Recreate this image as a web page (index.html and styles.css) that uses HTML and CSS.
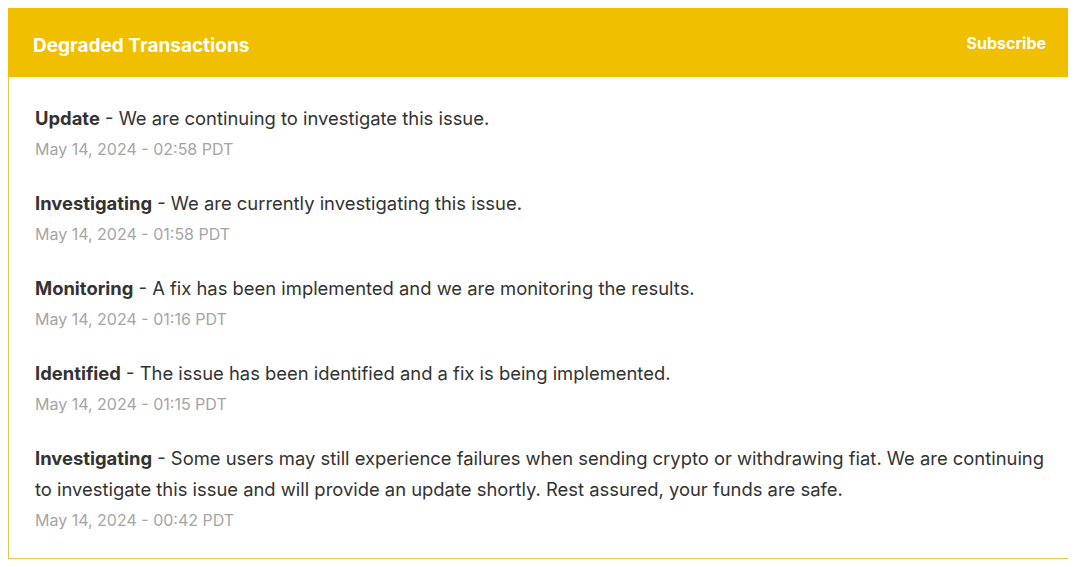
FILE: index.html
```html
<!DOCTYPE html>
<html>
<head>
<meta charset="utf-8">
<link rel="stylesheet" href="styles.css">
</head>
<body>
<div class="incident">
  <div class="header">
    <div class="title">Degraded Transactions</div>
    <a class="subscribe">Subscribe</a>
  </div>
  <div class="updates">
    <div class="update">
      <div class="text"><strong>Update</strong> - We are continuing to investigate this issue.</div>
      <div class="date">May 14, 2024 - 02:58 PDT</div>
    </div>
    <div class="update">
      <div class="text"><strong>Investigating</strong> - We are currently investigating this issue.</div>
      <div class="date">May 14, 2024 - 01:58 PDT</div>
    </div>
    <div class="update">
      <div class="text"><strong>Monitoring</strong> - A fix has been implemented and we are monitoring the results.</div>
      <div class="date">May 14, 2024 - 01:16 PDT</div>
    </div>
    <div class="update">
      <div class="text"><strong>Identified</strong> - The issue has been identified and a fix is being implemented.</div>
      <div class="date">May 14, 2024 - 01:15 PDT</div>
    </div>
    <div class="update">
      <div class="text"><strong>Investigating</strong> - Some users may still experience failures when sending crypto or withdrawing fiat. We are continuing to investigate this issue and will provide an update shortly. Rest assured, your funds are safe.</div>
      <div class="date">May 14, 2024 - 00:42 PDT</div>
    </div>
  </div>
</div>
</body>
</html>
```

FILE: styles.css
```css
body {
  margin: 8px;
  background: #fff;
  font-family: Inter, "Liberation Sans", sans-serif;
  color: #333;
}
.incident {
  width: 1063px;
}
.header {
  background: #efbf00;
  height: 69px;
  display: flex;
  align-items: center;
  justify-content: space-between;
  padding: 0 25px;
  box-sizing: border-box;
}
.title {
  color: #fff;
  font-weight: 700;
  font-size: 19px;
  padding-top: 5px;
}
.subscribe {
  color: #fff;
  font-weight: 700;
  font-size: 16px;
  padding-top: 1px;
}
.updates {
  border: 1px solid #e6c54a;
  border-top: none;
  padding: 26px 20px 23px 26px;
}
.update + .update {
  margin-top: 24px;
}
.text {
  font-size: 18.4px;
  line-height: 31px;
}
.text strong {
  font-weight: 700;
}
.date {
  font-size: 16px;
  line-height: 30px;
  color: #a5a5a5;
}
```
